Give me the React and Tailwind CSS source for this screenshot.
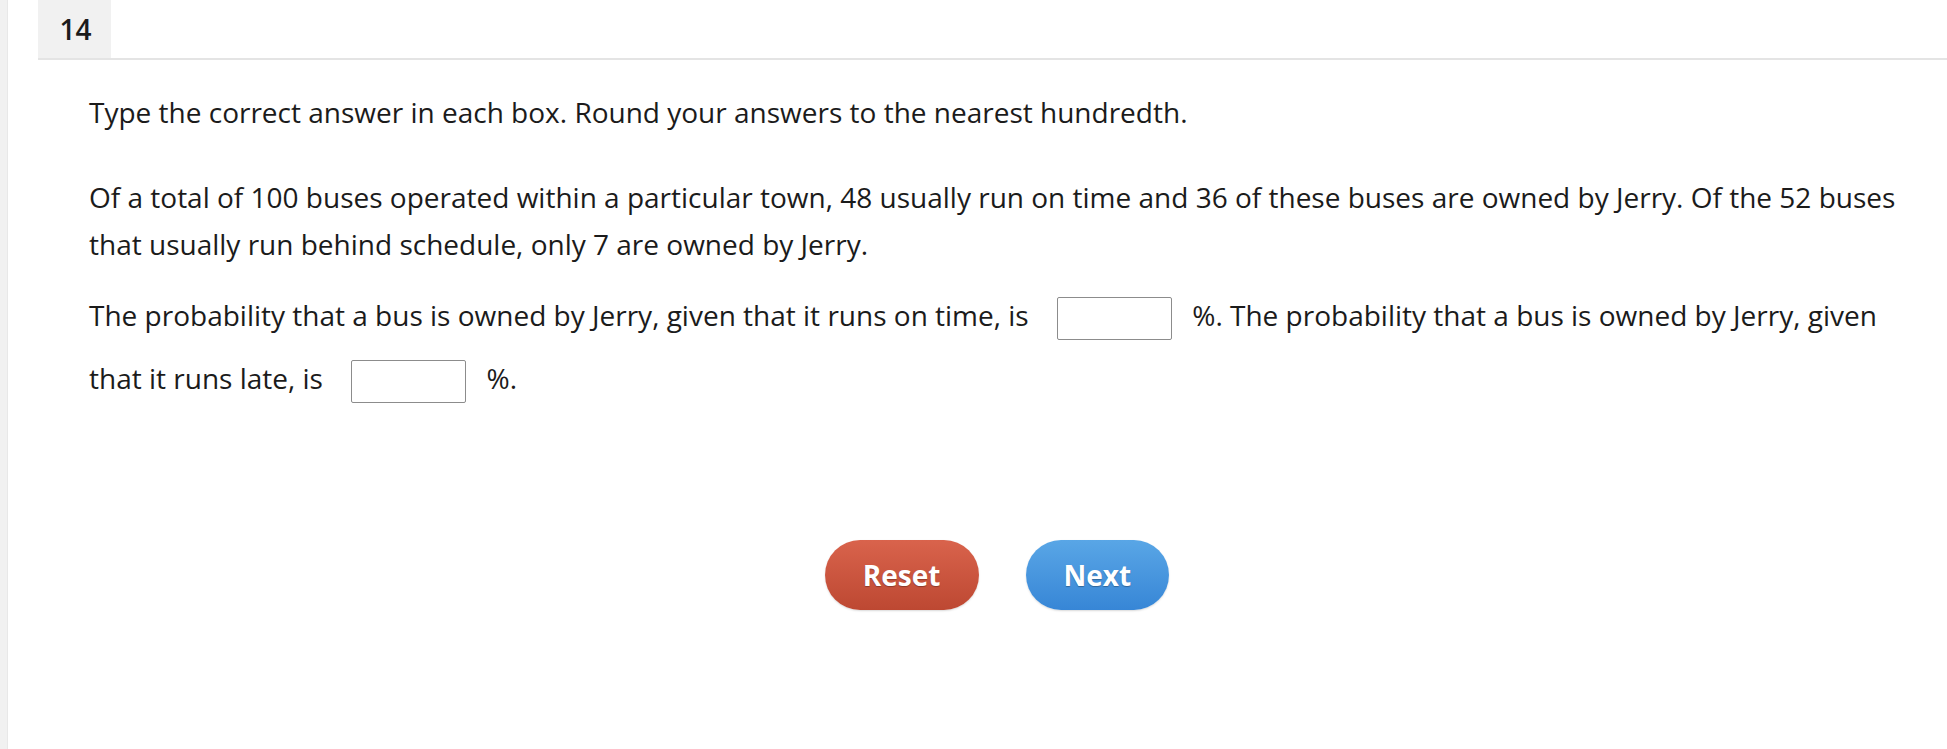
import React from "react";

function Box() {
  return (
    <span className="inline-block w-[115px] h-[43px] my-[10px] ml-[21px] mr-[13px] align-[-24px] border border-[#8c8c8c] rounded-[2px] bg-white"></span>
  );
}

export default function App() {
  return (
    <div className="flex w-full h-[749px] bg-white text-[#1b1b1b]" style={{ fontFamily: '"Open Sans", "Noto Sans", sans-serif' }}>
      <div className="w-[8px] shrink-0 bg-[#f1f1f1] border-r border-[#e8e8e8]"></div>
      <div className="flex-1 pl-[30px] flex flex-col">
        <div className="flex border-b-2 border-[#e4e4e4]">
          <div className="w-[73px] h-[58px] bg-[#f1f1f1] flex items-center justify-center text-[28px] font-semibold leading-none pl-[2px]">14</div>
        </div>
        <div className="pl-[51px] pr-[42px] pt-[29px] text-[28px] leading-[47px]">
          <p>Type the correct answer in each box. Round your answers to the nearest hundredth.</p>
          <p className="mt-[38px]">
            Of a total of 100 buses operated within a particular town, 48 usually run on time and 36 of these buses are owned by Jerry. Of the 52 buses that usually run behind schedule, only 7 are owned by Jerry.
          </p>
          <p className="mt-[19px]">
            The probability that a bus is owned by Jerry, given that it runs on time, is <Box /> %. The probability that a bus is owned by Jerry, given that it runs late, is <Box /> %.
          </p>
          <div className="flex justify-center gap-[47px] mt-[127px]">
            <button className="h-[70px] px-[38px] rounded-full bg-gradient-to-b from-[#d9634c] to-[#bd4832] text-white font-bold text-[28px] leading-none [text-shadow:0_1px_1px_rgba(0,0,0,0.3)] shadow-[0_1px_2px_rgba(0,0,0,0.15)]">
              Reset
            </button>
            <button className="h-[70px] px-[38px] rounded-full bg-gradient-to-b from-[#59a6e6] to-[#3786d6] text-white font-bold text-[28px] leading-none [text-shadow:0_1px_1px_rgba(0,0,0,0.3)] shadow-[0_1px_2px_rgba(0,0,0,0.15)]">
              Next
            </button>
          </div>
        </div>
      </div>
    </div>
  );
}
